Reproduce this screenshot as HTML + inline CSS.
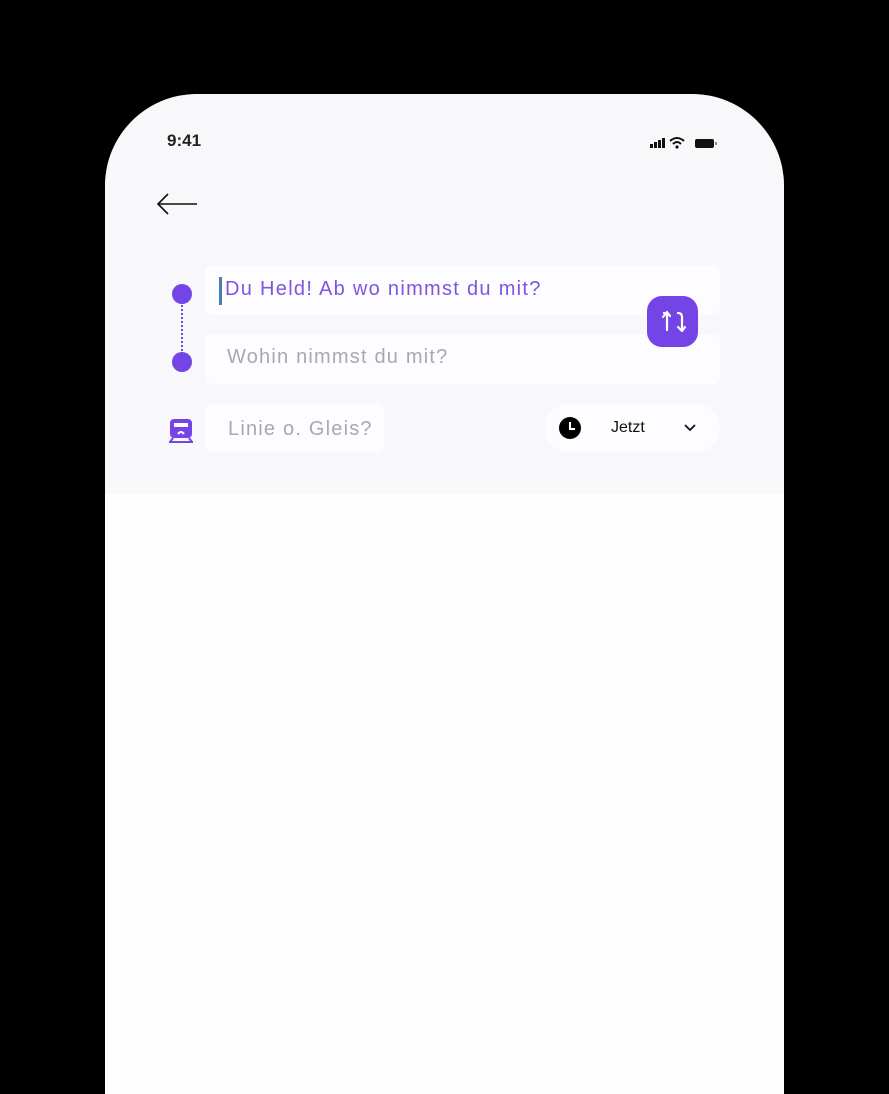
<!DOCTYPE html>
<html><head><meta charset="utf-8"><style>
body{margin:0;width:889px;height:1023px;background:#000;position:relative;overflow:hidden;font-family:"Liberation Sans",sans-serif}
.phone{position:absolute;left:105px;top:94px;width:679px;height:1000px;background:#fefefe;border-radius:92px 92px 0 0;overflow:hidden}
.top{position:absolute;left:0;top:0;width:679px;height:400px;background:#f8f7fa}
.abs{position:absolute}
.field{position:absolute;background:#fdfcfe;border-radius:6px}
.ph{position:absolute;font-size:20px;color:#aaa8ae;letter-spacing:1.2px}
</style></head><body>
<div class="phone">
<div class="top"></div>
<div class="abs" style="left:62px;top:37px;font-size:17px;font-weight:bold;color:#222">9:41</div>
<svg class="abs" style="left:544px;top:42px" width="70" height="14" viewBox="0 0 70 14">
<rect x="1" y="8" width="3" height="4" fill="#111"/><rect x="5" y="6" width="3" height="6" fill="#111"/><rect x="9" y="4" width="3" height="8" fill="#111"/><rect x="13" y="2" width="3" height="10" fill="#111"/>
<path d="M21 5 Q28 -1 35 5" stroke="#111" stroke-width="2" fill="none"/><path d="M24 8 Q28 4 32 8" stroke="#111" stroke-width="2" fill="none"/><circle cx="28" cy="11" r="1.6" fill="#111"/>
<rect x="46" y="3" width="19" height="9" rx="2" fill="#111"/><rect x="66" y="6" width="2" height="3" fill="#888"/>
</svg>
<svg class="abs" style="left:50px;top:98px" width="44" height="24" viewBox="0 0 44 24"><path d="M42 12H3M13 2L3 12L13 22" stroke="#111" stroke-width="1.6" fill="none"/></svg>

<div class="field" style="left:100px;top:171px;width:515px;height:50px"></div>
<div class="abs" style="left:114px;top:183px;width:3px;height:28px;background:#4a80b0"></div>
<div class="abs" style="left:120px;top:184px;font-size:20px;color:#7d55e2;letter-spacing:1.3px">Du Held! Ab wo nimmst du mit?</div>
<div class="field" style="left:100px;top:240px;width:515px;height:50px"></div>
<div class="ph" style="left:122px;top:252px">Wohin nimmst du mit?</div>
<div class="field" style="left:100px;top:310px;width:179px;height:48px"></div>
<div class="ph" style="left:123px;top:324px">Linie o. Gleis?</div>
<div class="abs" style="left:440px;top:310px;width:175px;height:48px;background:#fdfcfe;border-radius:24px"></div>
<svg class="abs" style="left:453px;top:322px" width="24" height="24" viewBox="0 0 24 24"><circle cx="12" cy="12" r="11" fill="#000"/><path d="M12 6V13H17" stroke="#fff" stroke-width="2" fill="none"/></svg>
<div class="abs" style="left:506px;top:325px;font-size:16px;color:#111">Jetzt</div>
<svg class="abs" style="left:578px;top:329px" width="14" height="10" viewBox="0 0 14 10"><path d="M2 2L7 7L12 2" stroke="#111" stroke-width="1.8" fill="none"/></svg>

<div class="abs" style="left:67px;top:190px;width:20px;height:20px;border-radius:50%;background:#7444e6"></div>
<div class="abs" style="left:76px;top:208px;width:0;height:52px;border-left:2px dotted #7444e6"></div>
<div class="abs" style="left:67px;top:258px;width:20px;height:20px;border-radius:50%;background:#7444e6"></div>
<svg class="abs" style="left:63px;top:324px" width="26" height="26" viewBox="0 0 26 26"><rect x="2" y="1" width="22" height="19" rx="4" fill="#7444e6"/><rect x="6" y="5" width="14" height="4" fill="#fff"/><path d="M10 16Q13 12 16 16" stroke="#fff" stroke-width="2" fill="none"/><path d="M1 24H25M5 20L2 24M21 20L24 24" stroke="#7444e6" stroke-width="2"/></svg>

<div class="abs" style="left:542px;top:202px;width:51px;height:51px;border-radius:15px;background:#7444e6"></div>
<svg class="abs" style="left:542px;top:202px" width="51" height="51" viewBox="0 0 51 51"><path d="M20 34V20Q20 17 17 17M20 16L16 21M20 16L23 20" stroke="#fff" stroke-width="2.2" fill="none" stroke-linecap="round"/><path d="M31 17Q35 17 35 21V35M35 35L31 31M35 35L38 31" stroke="#fff" stroke-width="2.2" fill="none" stroke-linecap="round"/></svg>
</div>
</body></html>
